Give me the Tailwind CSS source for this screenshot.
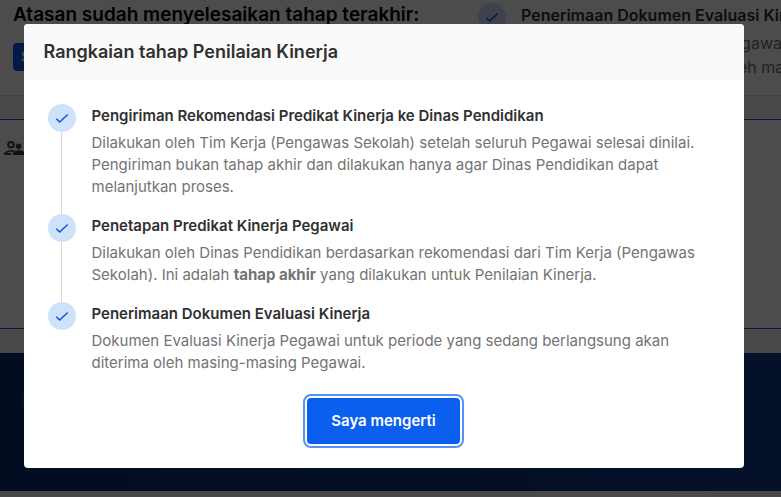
<!DOCTYPE html>
<html lang="id">
<head>
<meta charset="utf-8">
<title>Penilaian Kinerja</title>
<script src="https://cdn.jsdelivr.net/npm/@tailwindcss/browser@4"></script>
</head>
<body class="relative h-[497px] w-[781px] overflow-hidden bg-[#f2f2f2] font-['Inter',sans-serif]">
<svg class="hidden"><symbol id="check" viewBox="0 0 16 16"><path d="M2.3 8.8 5.7 12 13.7 4.4" fill="none" stroke="currentColor" stroke-width="1.4"/></symbol></svg>

<main class="overflow-hidden">
  <section class="flex h-[96px] border-b border-[#dcdcdc] bg-white">
    <div class="w-[478px] shrink-0 pl-[13px] pt-[2px]">
      <h2 class="whitespace-nowrap text-[19px] leading-[26px] font-semibold text-black">Atasan sudah menyelesaikan tahap terakhir:</h2>
      <span class="mt-[15px] inline-block h-7 rounded bg-[#0b57e3] px-2 text-sm leading-7 font-bold text-white">S</span>
    </div>
    <div class="flex shrink-0 gap-[15px] pt-[3px]">
      <span class="flex size-7 items-center justify-center rounded-full bg-[#cfe2fc] pr-px text-[#0b4fd6]"><svg class="size-4"><use href="#check"/></svg></span>
      <div class="w-[260px] overflow-hidden text-base leading-6">
        <h3 class="whitespace-nowrap font-semibold text-[#303030]">Penerimaan Dokumen Evaluasi Kinerja</h3>
        <p class="mt-1 whitespace-nowrap text-[#737373]">Dokumen Evaluasi Kinerja Pegawai untuk<br><span class="ml-[97px]">akan diterima oleh masing-masing</span></p>
      </div>
    </div>
  </section>
  <section class="mt-[23px] h-[210px] border-y border-[#0050c8] bg-white pl-1 pt-4">
    <svg class="size-6 text-[#404040]" viewBox="0 0 24 24" fill="currentColor"><path fill-rule="evenodd" d="M7 5a3.8 3.8 0 1 0 0 7.6A3.8 3.8 0 0 0 7 5zm0 2a1.8 1.8 0 1 1 0 3.6A1.8 1.8 0 0 1 7 7z"/><circle cx="14.7" cy="10.3" r="2.8"/><path d="M8.8 14c-3 0-8.8 1-8.8 4.2V19h7v-2H3c1-1 4-1.4 6-1.1l2.4-1.5A14 14 0 0 0 8.8 14zM15 14.3c-2.4 0-6.3 1.2-6.3 3.5V19h12.6v-1.2c0-2.3-3.9-3.5-6.3-3.5z"/></svg>
  </section>
  <section class="mt-6 flex h-[138px] bg-linear-to-r from-[#082c6e] to-[#113a88] pl-5 pt-[39px]"><svg class="h-5 w-6" viewBox="0 0 24 20"><path d="M1 1q0-1 1-1h22v20H4z" fill="#0a3cae"/></svg></section>
</main>

<div class="absolute inset-0 bg-black/70 p-6">
  <div class="flex h-[444px] w-[720px] flex-col overflow-hidden rounded-[4px] bg-white">
    <header class="flex h-14 shrink-0 items-center bg-[#fafafa] pl-[19.5px]">
      <h1 class="text-lg font-semibold text-[#303030]">Rangkaian tahap Penilaian Kinerja</h1>
    </header>
    <ol class="px-6 pt-6 text-[15px] leading-[22px]">
      <li class="flex h-[110px] gap-[15.5px]">
        <div class="flex w-7 flex-col items-center"><span class="flex size-7 shrink-0 items-center justify-center rounded-full bg-[#cfe2fc] pr-px text-[#0b4fd6]"><svg class="size-4"><use href="#check"/></svg></span><span class="mr-px w-px grow bg-[#d6d6d6]"></span></div>
        <div class="whitespace-nowrap pt-px"><h2 class="font-semibold text-[#303030]">Pengiriman Rekomendasi Predikat Kinerja ke Dinas Pendidikan</h2><p class="mt-[5px] text-[#737373]">Dilakukan oleh Tim Kerja (Pengawas Sekolah) setelah seluruh Pegawai selesai dinilai.<br>Pengiriman bukan tahap akhir dan dilakukan hanya agar Dinas Pendidikan dapat<br>melanjutkan proses.</p></div>
      </li>
      <li class="flex h-[88px] gap-[15.5px]">
        <div class="flex w-7 flex-col items-center"><span class="flex size-7 shrink-0 items-center justify-center rounded-full bg-[#cfe2fc] pr-px text-[#0b4fd6]"><svg class="size-4"><use href="#check"/></svg></span><span class="mr-px w-px grow bg-[#d6d6d6]"></span></div>
        <div class="whitespace-nowrap pt-px"><h2 class="font-semibold text-[#303030]">Penetapan Predikat Kinerja Pegawai</h2><p class="mt-[5px] text-[#737373]">Dilakukan oleh Dinas Pendidikan berdasarkan rekomendasi dari Tim Kerja (Pengawas<br>Sekolah). Ini adalah <b class="font-bold">tahap akhir</b> yang dilakukan untuk Penilaian Kinerja.</p></div>
      </li>
      <li class="flex h-[72px] gap-[15.5px]">
        <div class="flex w-7 flex-col items-center"><span class="flex size-7 shrink-0 items-center justify-center rounded-full bg-[#cfe2fc] pr-px text-[#0b4fd6]"><svg class="size-4"><use href="#check"/></svg></span></div>
        <div class="whitespace-nowrap pt-px"><h2 class="font-semibold text-[#303030]">Penerimaan Dokumen Evaluasi Kinerja</h2><p class="mt-[5px] text-[#737373]">Dokumen Evaluasi Kinerja Pegawai untuk periode yang sedang berlangsung akan<br>diterima oleh masing-masing Pegawai.</p></div>
      </li>
    </ol>
    <button class="ml-[283px] mt-6 h-[46px] w-[153px] rounded-[4px] bg-[#0b5fef] text-[15px] font-semibold text-white outline-2 outline-offset-2 outline-[#5593f5]">Saya mengerti</button>
  </div>
</div>
</body>
</html>
